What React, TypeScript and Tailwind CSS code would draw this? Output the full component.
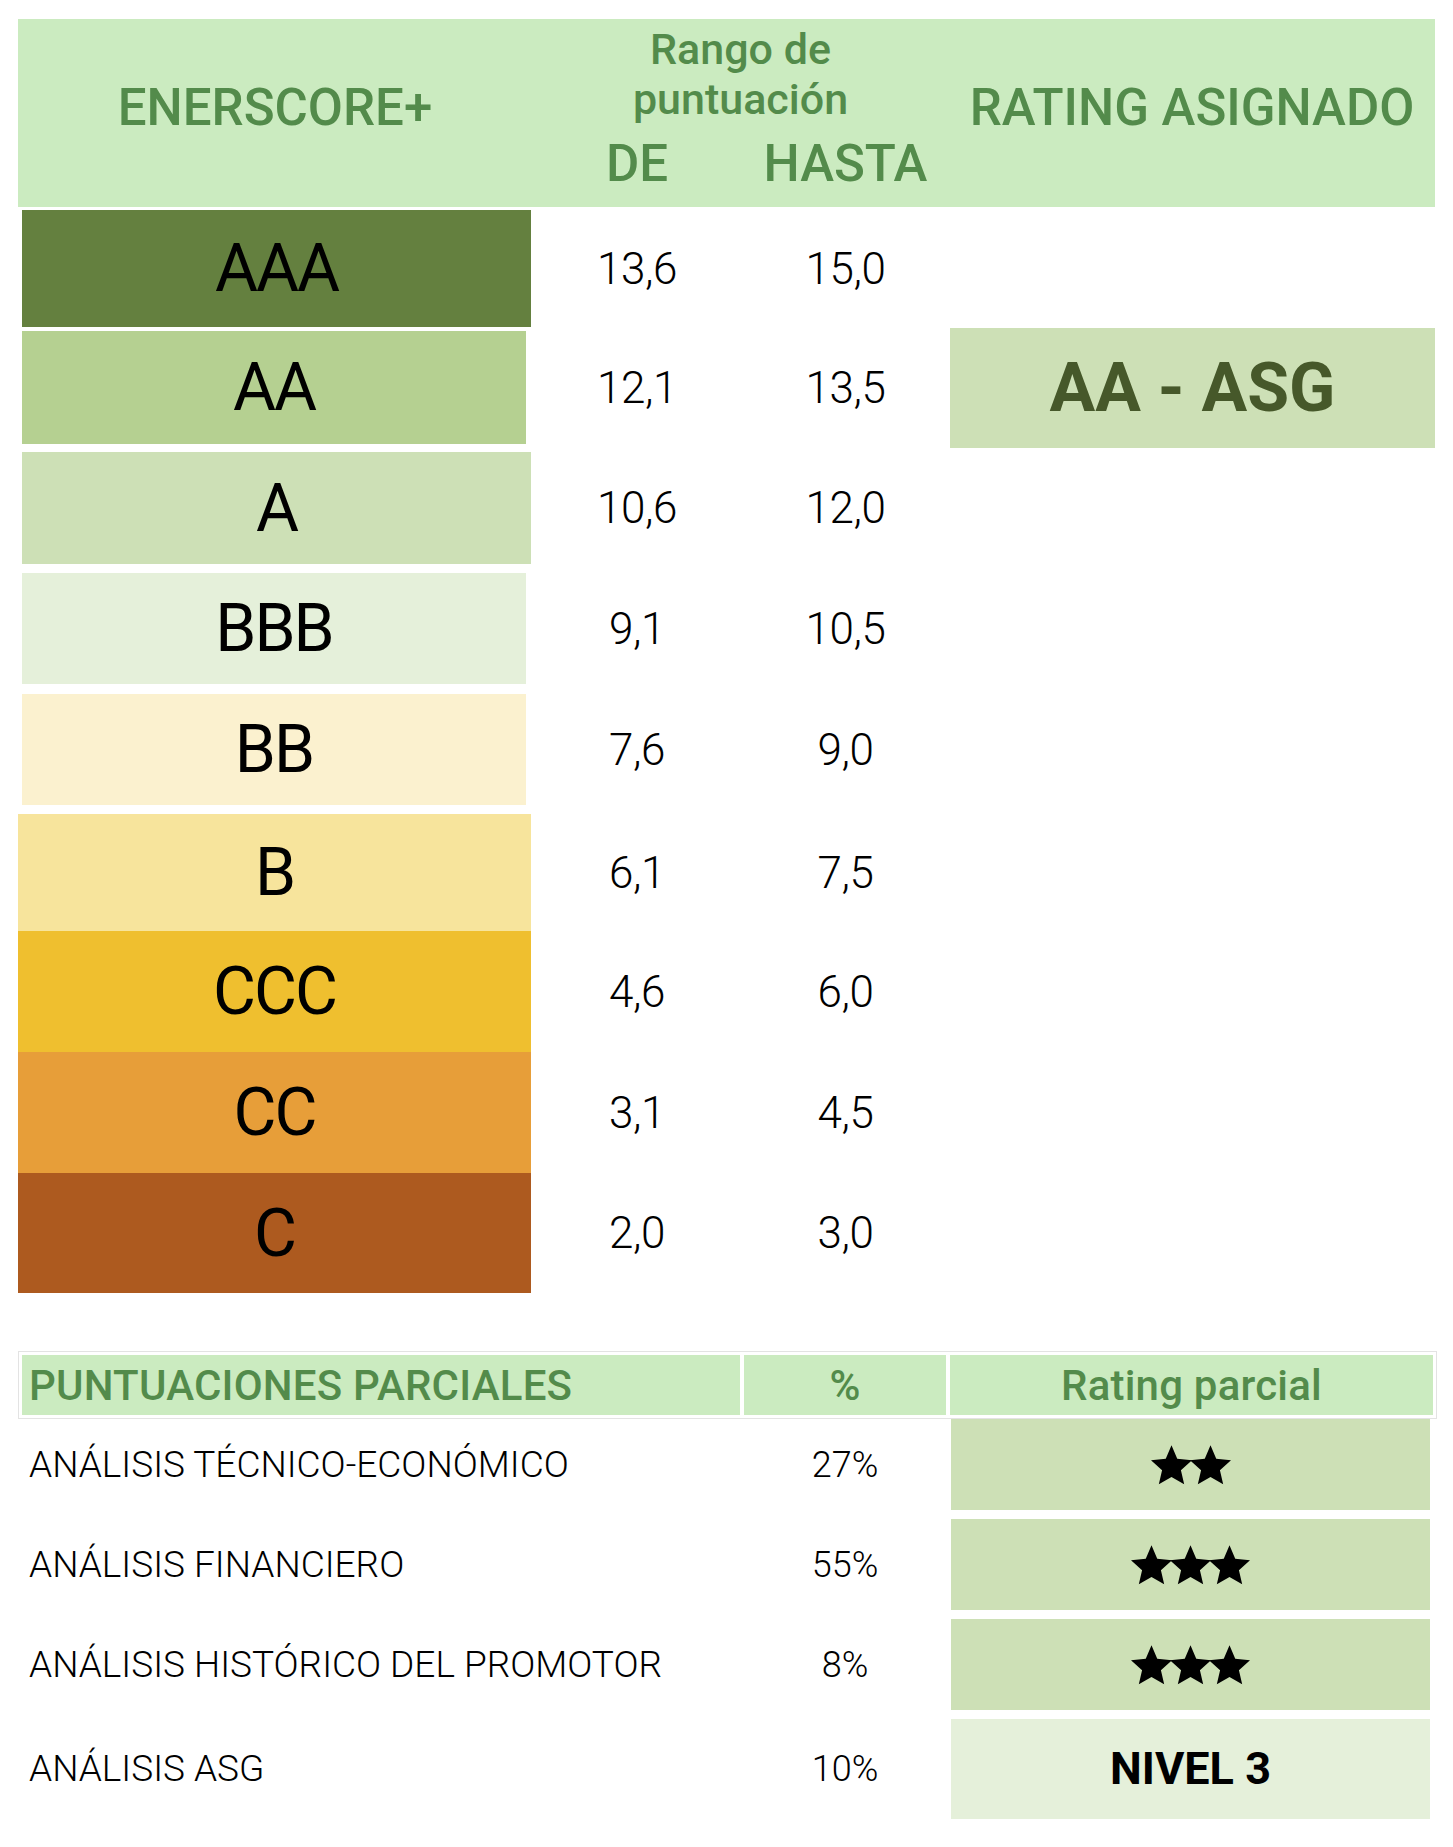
import { Fragment } from "react";

interface RatingRow {
  label: string;
  de: string;
  hasta: string;
  cell: string;
  row: string;
}

const ratings: RatingRow[] = [
  { label: "AAA", de: "13,6", hasta: "15,0", cell: "bg-[#64803f] ml-[4px] w-[509px]", row: "h-[117px] mb-[4px]" },
  { label: "AA", de: "12,1", hasta: "13,5", cell: "bg-[#b5d091] ml-[4px] w-[504px]", row: "h-[113px] mb-[8px]" },
  { label: "A", de: "10,6", hasta: "12,0", cell: "bg-[#cde0b6] ml-[4px] w-[509px]", row: "h-[112px] mb-[9px]" },
  { label: "BBB", de: "9,1", hasta: "10,5", cell: "bg-[#e5f0da] ml-[4px] w-[504px]", row: "h-[111px] mb-[10px]" },
  { label: "BB", de: "7,6", hasta: "9,0", cell: "bg-[#fbf1cf] ml-[4px] w-[504px]", row: "h-[111px] mb-[9px]" },
  { label: "B", de: "6,1", hasta: "7,5", cell: "bg-[#f7e49c] w-[513px]", row: "h-[117px]" },
  { label: "CCC", de: "4,6", hasta: "6,0", cell: "bg-[#efbf2f] w-[513px]", row: "h-[121px]" },
  { label: "CC", de: "3,1", hasta: "4,5", cell: "bg-[#e79e39] w-[513px]", row: "h-[121px]" },
  { label: "C", de: "2,0", hasta: "3,0", cell: "bg-[#ad5a1f] w-[513px]", row: "h-[120px]" },
];

const parciales = [
  { name: "ANÁLISIS TÉCNICO-ECONÓMICO", pct: "27%", stars: 2, row: "h-[91px] mb-[9px]" },
  { name: "ANÁLISIS FINANCIERO", pct: "55%", stars: 3, row: "h-[91px] mb-[9px]" },
  { name: "ANÁLISIS HISTÓRICO DEL PROMOTOR", pct: "8%", stars: 3, row: "h-[91px] mb-[9px]" },
  { name: "ANÁLISIS ASG", pct: "10%", stars: 0, row: "h-[100px]" },
];

function Star() {
  return (
    <svg viewBox="2 2 20 19.2" className="w-[41px] h-[40px] -ml-[2px] first:ml-0" fill="#000">
      <polygon points="12,2 14.8,8.6 22,9.27 16.6,14.1 18.18,21.02 12,17.4 5.82,21.02 7.4,14.1 2,9.27 9.2,8.6" />
    </svg>
  );
}

export default function App() {
  return (
    <div className="w-[1453px] h-[1847px] bg-white pt-[19px] font-[Roboto,'Liberation_Sans',sans-serif] text-black">
      {/* Tabla de rating */}
      <div className="ml-[18px] w-[1417px]">
        <div className="grid grid-cols-[514px_210px_207px_486px] h-[188px] bg-[#cbebc0] text-[#538b4b] font-medium">
          <div className="flex items-center justify-center pb-[10px] text-[51px]">ENERSCORE+</div>
          <div className="col-span-2 flex flex-col items-center pt-[5px]">
            <div className="text-[43px] leading-[50px] text-center">
              Rango de
              <br />
              puntuación
            </div>
            <div className="grid grid-cols-[210px_207px] mt-[10px] text-[51px] leading-[60px] text-center">
              <span>DE</span>
              <span>HASTA</span>
            </div>
          </div>
          <div className="flex items-center justify-center pb-[10px] text-[51px]">RATING ASIGNADO</div>
        </div>

        <div className="mt-[3px]">
          {ratings.map((r) => (
            <div key={r.label} className={`flex items-center ${r.row}`}>
              <div className="w-[514px] h-full flex">
                <div className={`h-full flex items-center justify-center text-[66px] tracking-[-0.03em] ${r.cell}`}>
                  {r.label}
                </div>
              </div>
              <div className="w-[210px] text-center text-[44px] font-light tracking-[-0.01em]">{r.de}</div>
              <div className="w-[207px] text-center text-[44px] font-light tracking-[-0.01em]">{r.hasta}</div>
              <div className="w-[486px] flex items-center">
                {r.label === "AA" && (
                  <div className="ml-[1px] w-[485px] h-[120px] bg-[#cde0b6] flex items-center justify-center text-[68px] font-bold text-[#46582a]">
                    AA - ASG
                  </div>
                )}
              </div>
            </div>
          ))}
        </div>
      </div>

      {/* Puntuaciones parciales */}
      <div className="mt-[58px] ml-[18px] w-[1419px]">
        <div className="border border-[#e3e3e3] p-[3px] grid grid-cols-[718px_202px_483px] gap-[4px] text-[42px] font-medium text-[#538b4b] tracking-[0.005em]">
          <div className="h-[60px] bg-[#cbebc0] flex items-center pl-[7px]">PUNTUACIONES PARCIALES</div>
          <div className="h-[60px] bg-[#cbebc0] flex items-center justify-center">%</div>
          <div className="h-[60px] bg-[#cbebc0] flex items-center justify-center">Rating parcial</div>
        </div>

        <div className="px-[4px]">
          {parciales.map((p) => (
            <div key={p.name} className={`grid grid-cols-[718px_206px_483px] items-center ${p.row}`}>
              <div className="pl-[7px] text-[37px] font-light">{p.name}</div>
              <div className="text-center pl-[4px] text-[36px] font-light">{p.pct}</div>
              <div
                className={`ml-[5px] w-[479px] h-full flex items-center justify-center ${
                  p.stars > 0 ? "bg-[#cde0b6]" : "bg-[#e5f0da]"
                }`}
              >
                {p.stars > 0 ? (
                  <div className="flex">
                    {Array.from({ length: p.stars }).map((_, i) => (
                      <Fragment key={i}>
                        <Star />
                      </Fragment>
                    ))}
                  </div>
                ) : (
                  <span className="text-[45px] font-bold">NIVEL 3</span>
                )}
              </div>
            </div>
          ))}
        </div>
      </div>
    </div>
  );
}
